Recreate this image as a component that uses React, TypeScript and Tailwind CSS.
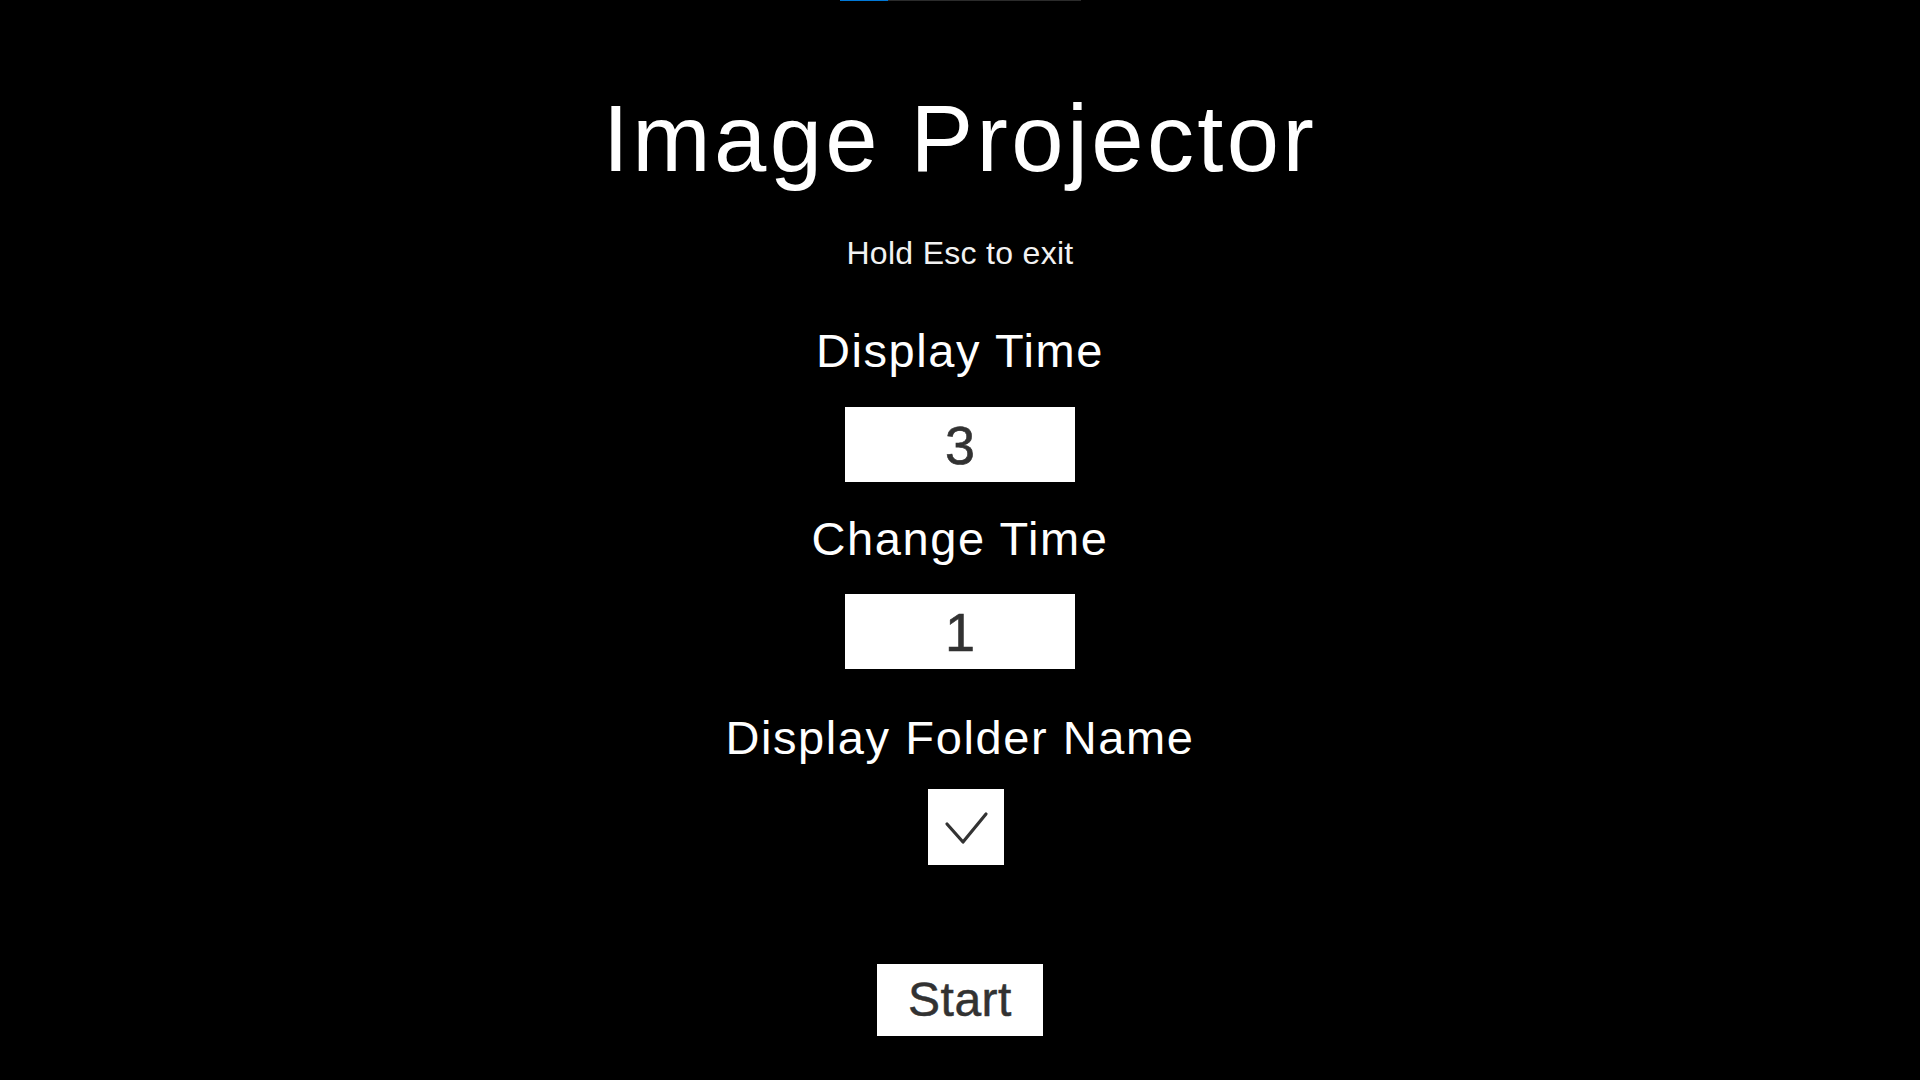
import React from "react";

const font = { fontFamily: '"Liberation Sans", Arial, sans-serif' };

export default function App() {
  return (
    <div
      className="w-full h-screen bg-black flex flex-col items-center overflow-hidden"
      style={font}
    >
      <div className="w-[241px] h-px flex bg-[#2b2b2b] shrink-0">
        <div className="w-[48px] h-px bg-[#0078d7]" />
      </div>

      <h1 className="mt-[91px] text-[94px] leading-none text-white tracking-[3.4px] font-normal">
        Image Projector
      </h1>

      <p className="mt-[51px] text-[32px] leading-none text-[#f2f2f2] tracking-[0.3px]">
        Hold Esc to exit
      </p>

      <p className="mt-[58px] text-[47px] leading-none text-white tracking-[1.6px]">
        Display Time
      </p>
      <div className="mt-[33px] w-[230px] h-[75px] bg-white flex items-center justify-center">
        <span className="text-[54px] leading-none text-[#323232] [-webkit-text-stroke:0.6px_#323232]">3</span>
      </div>

      <p className="mt-[33px] text-[47px] leading-none text-white tracking-[1.6px]">
        Change Time
      </p>
      <div className="mt-[32px] w-[230px] h-[75px] bg-white flex items-center justify-center">
        <span className="text-[54px] leading-none text-[#323232] [-webkit-text-stroke:0.6px_#323232]">1</span>
      </div>

      <p className="mt-[45px] text-[47px] leading-none text-white tracking-[1.6px]">
        Display Folder Name
      </p>
      <div className="mt-[28px] ml-[12px] w-[76px] h-[76px] bg-white flex items-center justify-center">
        <svg width="76" height="76" viewBox="0 0 76 76">
          <path
            d="M19 35 L35 53 L58 25"
            fill="none"
            stroke="#333333"
            strokeWidth="3.2"
            strokeLinecap="round"
            strokeLinejoin="round"
          />
        </svg>
      </div>

      <button className="mt-[99px] w-[166px] h-[72px] bg-white flex items-center justify-center">
        <span className="text-[48px] leading-none text-[#323232] tracking-[0.5px] [-webkit-text-stroke:0.5px_#323232]">
          Start
        </span>
      </button>
    </div>
  );
}
